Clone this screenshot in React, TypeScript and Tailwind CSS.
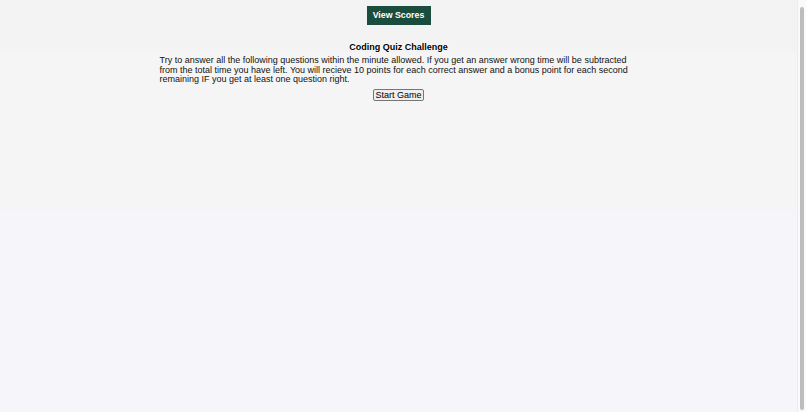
import React from 'react';

const App: React.FC = () => {
  return (
    <div className="flex h-screen w-full bg-[#f6f5f9] text-black [font-family:'Liberation_Sans',Arial,sans-serif]">
      <div className="flex-1">
        {/* Header */}
        <header className="flex h-[52px] justify-center bg-[#f3f3f3] pt-[6px]">
          <button className="h-[19px] w-[64px] bg-[#1b4d3e] text-[8.8px] font-bold text-white">
            View Scores
          </button>
        </header>

        {/* Intro */}
        <main className="flex h-[158px] flex-col items-center bg-[#f6f5f5]">
          <h1 className="-mt-[10px] text-[9px] leading-[10px] font-bold [text-shadow:0_0_1px_#fff,1px_0_0_#fff,-1px_0_0_#fff]">
            Coding Quiz Challenge
          </h1>
          <p className="mt-[4px] w-[478px] text-[9px] leading-[9.6px] text-[#111]">
            Try to answer all the following questions within the minute allowed. If you get an answer wrong time will be
            subtracted from the total time you have left. You will recieve 10 points for each correct answer and a bonus
            point for each second remaining IF you get at least one question right.
          </p>
          <button className="mt-[4px] h-[12px] rounded-[2px] border border-[#767676] bg-[#efefef] px-[1px] text-[9px] leading-[10px]">
            Start Game
          </button>
        </main>
      </div>

      {/* Scrollbar */}
      <div className="flex w-[9px] flex-col border-l border-[#ececec] bg-[#fafafa] px-[2px] pt-[7px] pb-[2px]">
        <div className="flex-1 rounded-full bg-[#bdbdbd]" />
      </div>
    </div>
  );
};

export default App;
